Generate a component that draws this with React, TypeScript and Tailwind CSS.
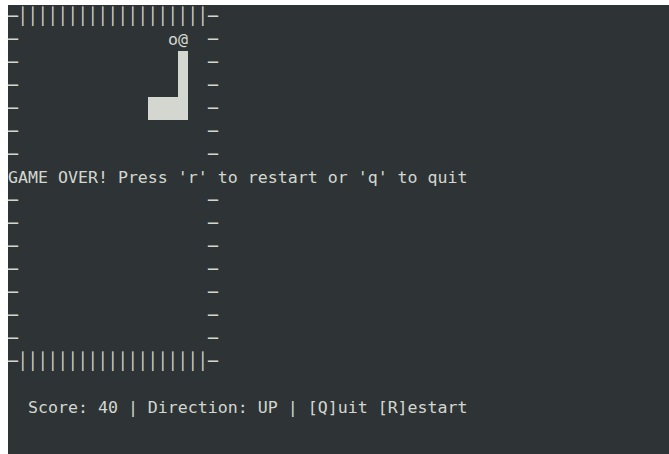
const COLS = 21;
const FG = "text-[#d3d7cf]";

type Cell = string | null; // null = filled block

function blankRow(): Cell[] {
  const r: Cell[] = Array(COLS).fill(" ");
  r[0] = "─";
  r[COLS - 1] = "─";
  return r;
}

function buildBoard(): Cell[][] {
  const rows: Cell[][] = [];
  const border: Cell[] = Array(COLS).fill("│");
  border[0] = "─";
  border[COLS - 1] = "─";
  rows.push(border);
  for (let i = 0; i < 14; i++) rows.push(blankRow());
  rows.push([...border]);
  // snake
  rows[1][16] = "o";
  rows[1][17] = "@";
  rows[2][17] = null;
  rows[3][17] = null;
  for (let c = 14; c <= 17; c++) rows[4][c] = null;
  return rows;
}

const board = buildBoard();

function Row({ cells }: { cells: Cell[] }) {
  return (
    <div className="flex h-[23px]">
      {cells.map((c, i) =>
        c === null ? (
          <span key={i} className="w-[10px] h-[23px] bg-[#d3d7cf]" />
        ) : (
          <span key={i} className="w-[10px] h-[23px] text-center whitespace-pre">
            {c}
          </span>
        )
      )}
    </div>
  );
}

export default function App() {
  return (
    <div className="w-[669px] h-[454px] bg-white pt-[5px] pl-[8px] overflow-hidden">
      <div
        className={`h-full bg-[#2e3436] ${FG} text-[16.6px] leading-[23px]`}
        style={{ fontFamily: '"DejaVu Sans Mono", "Liberation Mono", monospace' }}
      >
        {board.map((cells, i) =>
          i === 7 ? (
            <div key={i} className="h-[23px] whitespace-pre">
              GAME OVER! Press 'r' to restart or 'q' to quit
            </div>
          ) : (
            <Row key={i} cells={cells} />
          )
        )}
        <div className="h-[23px]" />
        <div className="h-[23px] whitespace-pre">  Score: 40 | Direction: UP | [Q]uit [R]estart</div>
      </div>
    </div>
  );
}
